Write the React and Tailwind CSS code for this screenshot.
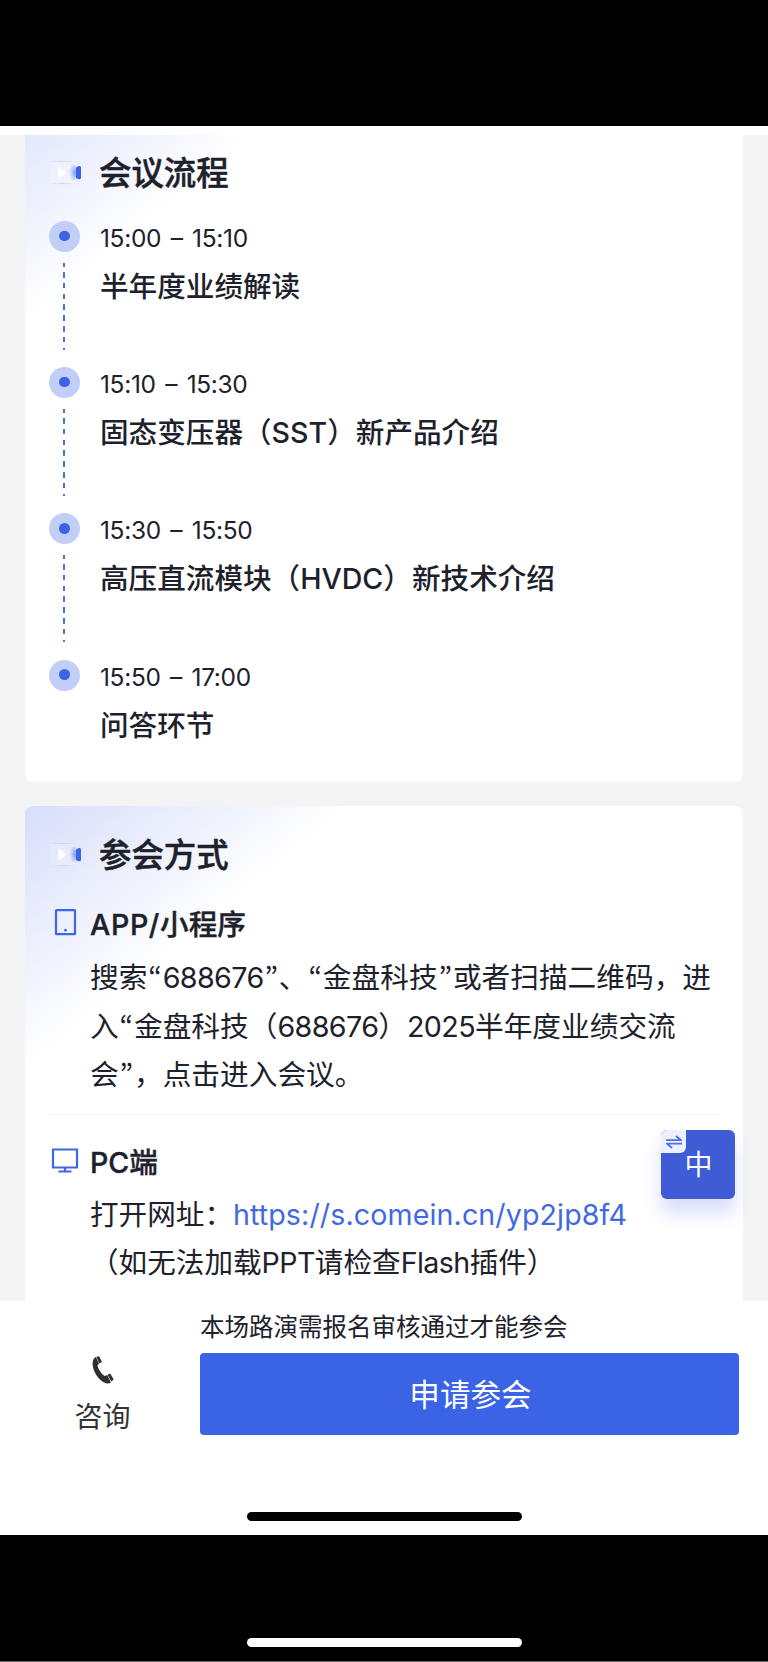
import React from 'react';

const agenda = [
  { time: '15:00 – 15:10', before: '半年度业绩解读' },
  { time: '15:10 – 15:30', before: '固态变压器（', latin: 'SST', after: '）新产品介绍' },
  { time: '15:30 – 15:50', before: '高压直流模块（', latin: 'HVDC', after: '）新技术介绍' },
  { time: '15:50 – 17:00', before: '问答环节' },
];

const CameraIcon = () => (
  <svg className="h-8 w-8 shrink-0" viewBox="0 0 32 32" fill="none">
    <defs>
      <radialGradient id="camGlow" cx="1" cy="0.5" r="1">
        <stop offset="0" stopColor="#5f82ea" stopOpacity="0.9" />
        <stop offset="0.4" stopColor="#a9bbf3" stopOpacity="0.6" />
        <stop offset="0.8" stopColor="#dfe6fb" stopOpacity="0" />
      </radialGradient>
      <linearGradient id="camEdge" x1="0" y1="0" x2="1" y2="0">
        <stop offset="0" stopColor="#cfd2de" stopOpacity="0.2" />
        <stop offset="0.5" stopColor="#cfd2de" />
        <stop offset="1" stopColor="#cfd2de" stopOpacity="0.2" />
      </linearGradient>
    </defs>
    <rect x="1" y="4.5" width="25" height="22.5" rx="3" fill="#ffffff" fillOpacity="0.15" />
    <rect x="2" y="4" width="24" height="0.9" fill="url(#camEdge)" />
    <rect x="2" y="26.2" width="24" height="0.9" fill="url(#camEdge)" />
    <rect x="17" y="7.5" width="9.5" height="16" fill="url(#camGlow)" />
    <path d="M9.2 11.8c0-1.300 1-1.900 2.100-1.200l5.200 3.900c.9.6.9 1.500 0 2.100l-5.200 3.900c-1.100.8-2.100.2-2.100-1.100z" fill="#ffffff" />
    <path d="M26.800 11.500c0-.8.5-1.400 1.200-1.700l1.600-.6c1.300-.4 2.400.2 2.400 1.400v10.200c0 1.200-1.100 1.800-2.400 1.400l-1.600-.6c-.7-.3-1.200-.9-1.200-1.700z" fill="#3a63e6" />
  </svg>
);

const PhoneIcon = () => (
  <svg className="h-[28px] w-[22px]" viewBox="0 0 22 28" fill="#2f2f2f">
    <path d="M.6 8.200C.4 4.700 1.600 2.200 3.800 1.100l3.200 6.300-1.500 2c.8 3.800 3.600 8.100 7.100 10.700l2.700-1 3.600 7.400c-2.500 1.500-5.900 1.100-8.700-1.200C5 21.400 1 14.600.6 8.200z" />
    <path d="M4.300.9L6 .3c.6-.2 1 0 1.300.5l2.400 4.400c.2.400.1.800-.2 1.100L7.400 7.400z" />
    <path d="M15.600 18.800l1.700-1c.4-.3.900-.2 1.200.2l2.800 4.700c.3.500.2.900-.1 1.200l-1.900 1.700z" />
  </svg>
);

const Quote = ({ children }) => (
  <span className="inline-block w-[15.3px] text-center font-['Noto_Sans_CJK_KR',sans-serif] leading-none" lang="ko">
    {children}
  </span>
);

const SectionTitle = ({ children }) => (
  <div className="flex h-12 items-center gap-[18px]">
    <CameraIcon />
    <h2 className="pt-[2px] text-[32.4px] leading-[48px] font-medium [-webkit-text-stroke:0.5px_#1d212b]">{children}</h2>
  </div>
);

const AgendaItem = ({ item, last }) => (
  <div className={last ? 'flex' : 'flex h-[146.2px]'}>
    <div className="flex w-[31px] flex-col items-center">
      <div className="flex h-[31px] w-[31px] items-center justify-center rounded-full bg-[#c1cef7]">
        <span className="mb-px h-[10.5px] w-[10.5px] rounded-full bg-[#3a63e6]" />
      </div>
      {!last && (
        <div className="mt-[11px] mr-px h-[87px] w-[2px] bg-[repeating-linear-gradient(180deg,#4a70dc_0_3.8px,transparent_3.8px_9px,#4a70dc_9px_10.8px)]" />
      )}
    </div>
    <div className="ml-5 whitespace-nowrap">
      <p className="text-[24.5px] leading-[34px] tracking-[-0.014em] [word-spacing:3px]">{item.time}</p>
      <p className="mt-[11px] text-[28.6px] leading-[42px] font-medium">
        {item.before}
        {item.latin && <span>{item.latin}</span>}
        {item.after}
      </p>
    </div>
  </div>
);

const App = () => {
  return (
    <div className="flex h-[1662px] w-[768px] flex-col overflow-hidden bg-black font-[Inter,'Noto_Sans_CJK_SC',sans-serif] text-[#1d212b]">
      <div className="h-[126px] shrink-0" />

      <div className="relative h-[1409px] shrink-0 bg-white pt-[9px]">
        <main className="h-[1166px] overflow-hidden bg-[#f4f4f4] px-[25px]">
          <section className="h-[647px] rounded-b-lg bg-white bg-[linear-gradient(141deg,#d6defa_-60px,#ffffff_145px)] px-6 pt-[14px]">
            <SectionTitle>会议流程</SectionTitle>
            <div className="mt-[24px]">
              {agenda.map((item, i) => (
                <AgendaItem key={item.time} item={item} last={i === agenda.length - 1} />
              ))}
            </div>
          </section>

          <section className="mt-6 h-[520px] rounded-t-lg bg-white bg-[linear-gradient(141deg,#d6defa_0px,#ffffff_205px)] px-6 pt-[25px] whitespace-nowrap">
            <SectionTitle>参会方式</SectionTitle>

            <div className="mt-[24px] flex h-[42px] items-center">
              <svg className="h-[30px] w-[41px] shrink-0" viewBox="0 0 41 30" fill="none">
                <rect x="7" y="1.2" width="19" height="24" rx="0.5" stroke="#3f67e4" strokeWidth="2.2" />
                <circle cx="16.500" cy="21.200" r="1.400" fill="#3f67e4" />
              </svg>
              <h3 className="pt-[2px] text-[28.6px] leading-[42px] font-medium [-webkit-text-stroke:0.4px_#1d212b]">
                <span className="tracking-[0.022em]">APP/</span>小程序
              </h3>
            </div>
            <p className="mt-[9px] ml-[41px] text-[28.7px] leading-[48.6px]">
              搜索<Quote>“</Quote><span className="tracking-[-0.022em]">688676</span><Quote>”</Quote>、<Quote>“</Quote>金盘科技<Quote>”</Quote>或者扫描二维码，进
              <br />
              入<Quote>“</Quote>金盘科技（<span className="tracking-[-0.022em]">688676</span>）<span className="tracking-[-0.022em]">2025</span>半年度业绩交流
              <br />
              会<Quote>”</Quote>，点击进入会议。
            </p>

            <div className="mt-[14px] h-px bg-[#f3f3f3]" />

            <div className="mt-[26px] flex h-[42px] items-center">
              <svg className="h-[30px] w-[41px] shrink-0" viewBox="0 0 41 30" fill="none">
                <path d="M4 2.500h24v18H4zM16 20.500v4M9.500 24.500h13" stroke="#3f67e4" strokeWidth="2.200" />
              </svg>
              <h3 className="pt-[2px] text-[28.6px] leading-[42px] font-medium [-webkit-text-stroke:0.4px_#1d212b]">
                PC端
              </h3>
            </div>
            <p className="mt-[8px] ml-[41px] text-[28.6px] leading-[48.6px]">
              打开网址：<a className="tracking-[0.004em] text-[#4169e1]">https://s.comein.cn/yp2jp8f4</a>
              <br />
              （如无法加载<span className="tracking-[-0.02em]">PPT</span>请检查<span className="tracking-[-0.02em]">Flash</span>插件）
            </p>
          </section>
        </main>

        {/* language switch floating over the page */}
        <button className="absolute top-[1004px] left-[661px] h-[69px] w-[74px] rounded-md bg-[#3f5bd6] pt-[1px] pl-[1px] text-[28px] leading-[69px] text-white shadow-[0_14px_18px_rgba(63,91,230,0.2)]">
          中
          <span className="absolute top-0 left-0 flex h-[23px] w-[25px] items-center justify-center rounded-tl-md rounded-br-md bg-[#ecf0fe]">
            <svg width="16" height="14" viewBox="0 0 16 14" fill="none" stroke="#4b72e6" strokeWidth="1.8">
              <path d="M0 5.200h15L10 1M16 8.700H1L6 13" />
            </svg>
          </span>
        </button>

        <footer className="flex h-[234px]">
          <div className="flex w-[200px] flex-col items-center pt-[55px] pl-[5px]">
            <PhoneIcon />
            <span className="mt-[12px] text-[28px] leading-[42px] text-[#333333]">咨询</span>
          </div>
          <div className="w-[539px]">
            <p className="pt-[8px] text-[24.5px] leading-[36px] whitespace-nowrap">本场路演需报名审核通过才能参会</p>
            <button className="mt-[8px] h-[82px] w-full rounded bg-[#3a63e6] pt-[2px] pl-[2px] text-[30.6px] leading-[80px] text-white">
              申请参会
            </button>
          </div>
        </footer>

        <div className="absolute bottom-[14px] left-[247px] h-[9px] w-[275px] rounded-full bg-black" />
      </div>

      <div className="flex flex-1 items-end justify-center border-b border-[#6b6b6b] pb-[14px]">
        <div className="h-[9px] w-[275px] rounded-full bg-white" />
      </div>
    </div>
  );
};

export default App;
